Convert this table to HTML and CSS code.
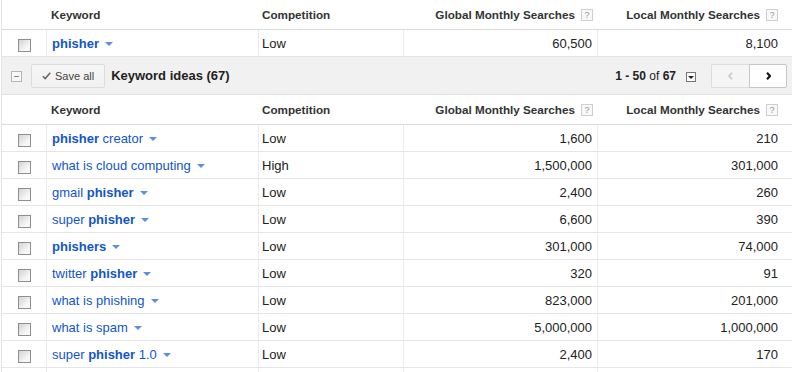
FILE: index.html
```html
<!DOCTYPE html>
<html lang="en">
<head>
  <meta charset="UTF-8">
  <title>Keyword ideas</title>
  <link rel="stylesheet" href="styles.css">
</head>
<body>
  <div class="kw-table">
    <!-- searched keyword -->
    <div class="row head">
      <div class="cell"></div>
      <div class="cell">Keyword</div>
      <div class="cell comp">Competition</div>
      <div class="cell num">Global Monthly Searches <span class="help">?</span></div>
      <div class="cell num last">Local Monthly Searches <span class="help">?</span></div>
    </div>
    <div class="row">
      <div class="cell check-cell"><span class="check"></span></div>
      <div class="cell"><a class="kw-link"><b>phisher</b></a><span class="caret"></span></div>
      <div class="cell comp">Low</div>
      <div class="cell num">60,500</div>
      <div class="cell num last">8,100</div>
    </div>

    <!-- toolbar -->
    <div class="toolbar">
      <span class="collapse"></span>
      <button class="btn-save">
        <svg width="9" height="8" viewBox="0 0 9 8"><path d="M0.8 4.2 L3.2 6.6 L8.2 0.8" fill="none" stroke="#666" stroke-width="1.5"/></svg>
        Save all
      </button>
      <span class="ideas-title">Keyword ideas (67)</span>
      <span class="spacer"></span>
      <span class="page-info"><b>1 - 50</b> of <b>67</b></span>
      <span class="page-drop"></span>
      <div class="pager">
        <button class="pg prev">
          <svg width="5" height="8" viewBox="0 0 5 8"><path d="M4 0.8 L1 4 L4 7.2" fill="none" stroke="#c4c4c4" stroke-width="1.6"/></svg>
        </button>
        <button class="pg next">
          <svg width="5" height="8" viewBox="0 0 5 8"><path d="M1 0.8 L4 4 L1 7.2" fill="none" stroke="#111" stroke-width="2"/></svg>
        </button>
      </div>
    </div>

    <!-- ideas -->
    <div class="row head">
      <div class="cell"></div>
      <div class="cell">Keyword</div>
      <div class="cell comp">Competition</div>
      <div class="cell num">Global Monthly Searches <span class="help">?</span></div>
      <div class="cell num last">Local Monthly Searches <span class="help">?</span></div>
    </div>
    <div class="row">
      <div class="cell check-cell"><span class="check"></span></div>
      <div class="cell"><a class="kw-link"><b>phisher</b> creator</a><span class="caret"></span></div>
      <div class="cell comp">Low</div>
      <div class="cell num">1,600</div>
      <div class="cell num last">210</div>
    </div>
    <div class="row">
      <div class="cell check-cell"><span class="check"></span></div>
      <div class="cell"><a class="kw-link">what is cloud computing</a><span class="caret"></span></div>
      <div class="cell comp">High</div>
      <div class="cell num">1,500,000</div>
      <div class="cell num last">301,000</div>
    </div>
    <div class="row">
      <div class="cell check-cell"><span class="check"></span></div>
      <div class="cell"><a class="kw-link">gmail <b>phisher</b></a><span class="caret"></span></div>
      <div class="cell comp">Low</div>
      <div class="cell num">2,400</div>
      <div class="cell num last">260</div>
    </div>
    <div class="row">
      <div class="cell check-cell"><span class="check"></span></div>
      <div class="cell"><a class="kw-link">super <b>phisher</b></a><span class="caret"></span></div>
      <div class="cell comp">Low</div>
      <div class="cell num">6,600</div>
      <div class="cell num last">390</div>
    </div>
    <div class="row">
      <div class="cell check-cell"><span class="check"></span></div>
      <div class="cell"><a class="kw-link"><b>phishers</b></a><span class="caret"></span></div>
      <div class="cell comp">Low</div>
      <div class="cell num">301,000</div>
      <div class="cell num last">74,000</div>
    </div>
    <div class="row">
      <div class="cell check-cell"><span class="check"></span></div>
      <div class="cell"><a class="kw-link">twitter <b>phisher</b></a><span class="caret"></span></div>
      <div class="cell comp">Low</div>
      <div class="cell num">320</div>
      <div class="cell num last">91</div>
    </div>
    <div class="row">
      <div class="cell check-cell"><span class="check"></span></div>
      <div class="cell"><a class="kw-link">what is phishing</a><span class="caret"></span></div>
      <div class="cell comp">Low</div>
      <div class="cell num">823,000</div>
      <div class="cell num last">201,000</div>
    </div>
    <div class="row">
      <div class="cell check-cell"><span class="check"></span></div>
      <div class="cell"><a class="kw-link">what is spam</a><span class="caret"></span></div>
      <div class="cell comp">Low</div>
      <div class="cell num">5,000,000</div>
      <div class="cell num last">1,000,000</div>
    </div>
    <div class="row">
      <div class="cell check-cell"><span class="check"></span></div>
      <div class="cell"><a class="kw-link">super <b>phisher</b> 1.0</a><span class="caret"></span></div>
      <div class="cell comp">Low</div>
      <div class="cell num">2,400</div>
      <div class="cell num last">170</div>
    </div>
    <!-- next row only peeks in at the bottom edge -->
    <div class="row">
      <div class="cell"></div>
      <div class="cell"></div>
      <div class="cell"></div>
      <div class="cell"></div>
      <div class="cell"></div>
    </div>
  </div>
</body>
</html>
```

FILE: styles.css
```css
body {
  margin: 0;
  font-family: "Liberation Sans", Arial, sans-serif;
  font-size: 13px;
  color: #222;
  background: #fff;
  overflow: hidden;
}

.kw-table {
  margin-left: 1px;
  border-left: 1px solid #e5e5e5;
}

/* rows */
.row {
  display: grid;
  grid-template-columns: 44px 212px 145px 194px 1fr;
  height: 26px;
  border-bottom: 1px solid #e5e5e5;
}

.row.head {
  height: 29px;
  border-bottom-color: #d9d9d9;
}

.cell {
  display: flex;
  align-items: center;
  padding: 0 5px;
  white-space: nowrap;
  box-sizing: border-box;
}

.cell + .cell {
  border-left: 1px solid #ebebeb;
}

.row.head .cell {
  border-left: none;
  font-size: 11.7px;
  font-weight: bold;
  color: #333;
}

.cell.comp {
  padding-left: 3px;
}

.row.head .cell.comp {
  padding-left: 4px;
}

.cell.num {
  justify-content: flex-end;
}

.row.head .cell.num {
  padding-right: 4px;
}

.cell.last,
.row.head .cell.last {
  padding-right: 14px;
}

.help {
  display: inline-block;
  width: 10px;
  height: 10px;
  margin-left: 6px;
  border: 1px solid #cfcfcf;
  background: #f8f8f8;
  color: #999;
  font-size: 9px;
  font-weight: normal;
  line-height: 10px;
  text-align: center;
}

/* checkbox + keyword */
.check-cell {
  justify-content: center;
  padding: 0;
}

.check {
  width: 11px;
  height: 11px;
  margin-top: 4px;
  border: 1px solid #8e8e8e;
  background: linear-gradient(135deg, #d2d2d2, #f7f7f7 70%);
}

.kw-link {
  color: #1155cc;
  text-decoration: none;
  cursor: pointer;
}

.caret {
  width: 0;
  height: 0;
  margin-left: 6px;
  margin-top: 1px;
  border-left: 4px solid transparent;
  border-right: 4px solid transparent;
  border-top: 4px solid #5d8fdc;
}

/* toolbar */
.toolbar {
  display: flex;
  align-items: center;
  height: 37px;
  padding: 0 5px 0 9px;
  background: #f1f1f1;
  border-bottom: 1px solid #e0e0e0;
}

.collapse {
  position: relative;
  width: 9px;
  height: 9px;
  margin-top: 2px;
  border: 1px solid #b5b5b5;
  background: #f7f7f7;
}

.collapse::after {
  content: "";
  position: absolute;
  left: 2px;
  right: 2px;
  top: 4px;
  height: 1px;
  background: #888;
}

.btn-save {
  display: flex;
  align-items: center;
  gap: 4px;
  height: 24px;
  margin-left: 9px;
  padding: 0 10px;
  border: 1px solid #dcdcdc;
  border-radius: 2px;
  background: linear-gradient(#f6f6f6, #f1f1f1);
  color: #444;
  font-family: inherit;
  font-size: 11px;
}

.ideas-title {
  margin-left: 6px;
  font-weight: bold;
  color: #222;
}

.spacer {
  flex: 1;
}

.page-info {
  font-size: 12px;
  color: #222;
}

.page-drop {
  position: relative;
  width: 8px;
  height: 8px;
  margin-left: 10px;
  margin-top: 2px;
  border: 1px solid #777;
  background: #fff;
}

.page-drop::after {
  content: "";
  position: absolute;
  left: 1px;
  top: 3px;
  border-left: 3px solid transparent;
  border-right: 3px solid transparent;
  border-top: 3px solid #222;
}

.pager {
  display: flex;
  margin-left: 15px;
}

.pg {
  display: flex;
  align-items: center;
  justify-content: center;
  width: 38px;
  height: 24px;
  padding: 0;
  border: 1px solid #dcdcdc;
}

.pg.prev {
  border-radius: 2px 0 0 2px;
  background: #f5f5f5;
  border-right: none;
}

.pg.next {
  border-radius: 0 2px 2px 0;
  background: #fff;
  border-color: #c6c6c6;
}
```
